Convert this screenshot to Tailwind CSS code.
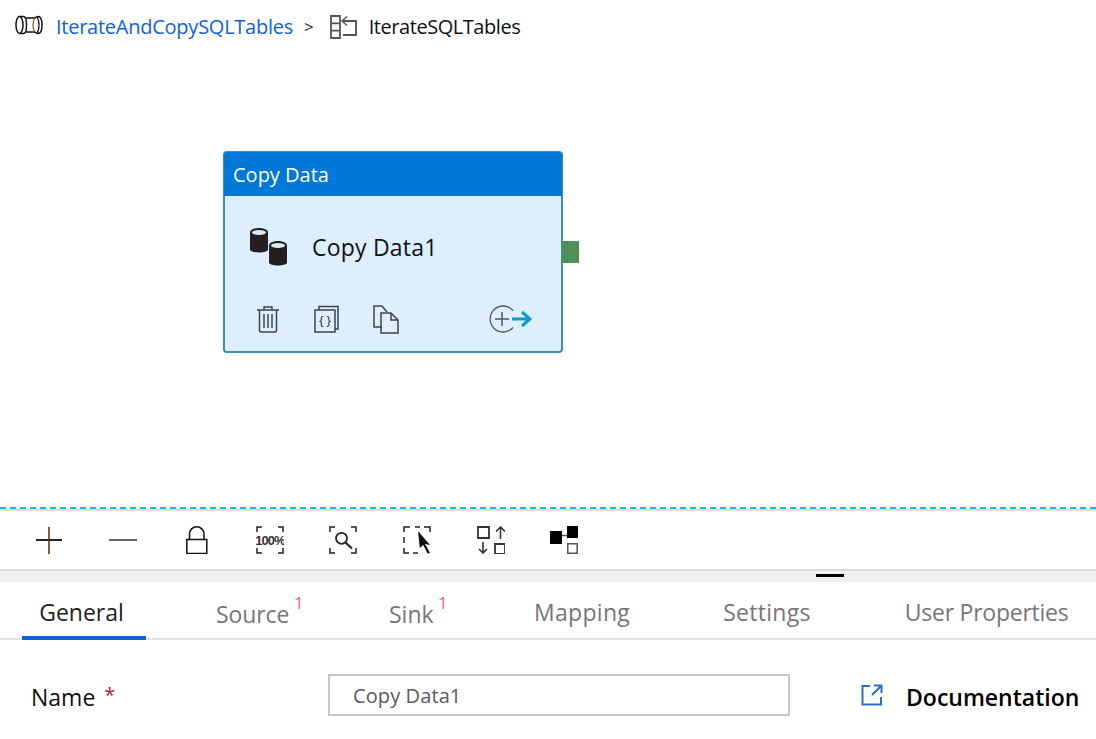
<!DOCTYPE html>
<html lang="en">
<head>
<meta charset="UTF-8">
<script src="https://cdn.jsdelivr.net/npm/@tailwindcss/browser@4"></script>
<title>IterateSQLTables</title>
</head>
<body class="bg-white h-[739px] w-[1096px] overflow-hidden font-['Open_Sans',sans-serif]">

<!-- breadcrumb -->
<div class="flex items-center h-[54px] pl-[15px] text-[20px]">
  <svg class="w-[28px] h-[20px] mb-[5px]" viewBox="0 0 28 20" fill="none" stroke="#111" stroke-width="1.500">
    <ellipse cx="4.500" cy="10" rx="3.500" ry="8.500"/>
    <path d="M4.500 1.500h4c2 0 3 4 3 8.500s-1 8.500-3 8.500h-4" />
    <path d="M11 3h9M11 17h9"/>
    <path d="M20 3c-1.500 2-2 4.500-2 7s.5 5 2 7" stroke="#8a5a10" stroke-width="1.200"/>
    <path d="M20 3c1-1 2-1.500 3-1.500 2.500 0 4 3.500 4 8.500s-1.500 8.500-4 8.500c-1 0-2-.5-3-1.500"/>
    <path d="M22 2c1.500 2 2 5 2 8s-.5 6-2 8" stroke-width="1.200"/>
  </svg>
  <span class="ml-[13px] w-[237px] tracking-[-0.25px] text-[#0f62d6]">IterateAndCopySQLTables</span>
  <span class="ml-[11px] text-[#222] text-[17px]">&gt;</span>
  <svg class="ml-[16px] w-[27px] h-[24px]" viewBox="0 0 27 24" fill="none" stroke="#555" stroke-width="1.800">
    <path d="M1 1h9v22H1zM1 8.300h9M1 15.600h9"/>
    <path d="M12 6h14v14H13"/>
    <path d="M17 1.500l-5 4.500 5 4.500" stroke-width="1.500"/>
  </svg>
  <span class="ml-[12px] tracking-[-0.45px] text-[#111]">IterateSQLTables</span>
</div>

<!-- pipeline canvas -->
<div class="relative h-[453px]">
  <div class="absolute left-[223px] top-[97px] w-[340px] h-[202px] rounded-[4px] border-2 border-[#3a8fb5] bg-[#ddefff]">
    <div class="h-[44px] -mt-[1px] -mx-[1px] rounded-t-[4px] bg-[#0078d7] text-white text-[20px] pl-[9px] leading-[46px]">Copy Data</div>
    <div class="flex items-center pl-[24px] mt-[29px] h-[44px]">
      <svg class="w-[40px] h-[40px]" viewBox="0 0 40 40">
        <path d="M1 5.500c0-6 18-6 18 0v17c0 4-18 4-18 0z" fill="#231f20"/>
        <ellipse cx="10" cy="5.500" rx="7" ry="2.500" fill="#dfe9f2"/>
        <path d="M20 18.500c0-6 18-6 18 0v17c0 4-18 4-18 0z" fill="#231f20"/>
        <ellipse cx="29" cy="18.500" rx="7" ry="2.500" fill="#dfe9f2"/>
      </svg>
      <span class="ml-[23px] text-[23px] tracking-[0.2px] text-[#111]">Copy Data1</span>
    </div>
    <div class="flex items-center mt-[34px] pl-[31px] h-[32px]">
      <svg class="w-[24px] h-[30px]" viewBox="0 0 24 30" fill="none" stroke="#444" stroke-width="1.500">
        <path d="M1 6h22M8 6V3h8v3M3.500 6v20.500q0 1.500 1.500 1.500h14q1.500 0 1.500-1.500V6M8 10v14M12 10v14M16 10v14"/>
      </svg>
      <svg class="ml-[33px] w-[26px] h-[30px]" viewBox="0 0 26 30" fill="none" stroke="#444" stroke-width="1.500">
        <path d="M2 6h20v22H2zM6 6V2.500h19V25h-3"/>
        <text x="12" y="21" text-anchor="middle" font-size="12" font-weight="400" fill="#222" stroke="none" font-family="Open Sans">{ }</text>
      </svg>
      <svg class="ml-[34px] w-[26px] h-[30px]" viewBox="0 0 26 30" fill="none" stroke="#444" stroke-width="1.500">
        <path d="M9 23H1V2h8l5 6"/>
        <path d="M8 9h10l7 7v13H8zM18 9v7h7"/>
      </svg>
      <svg class="ml-[89px] w-[44px] h-[30px]" viewBox="0 0 44 30" fill="none">
        <path d="M25 6.500A13 13 0 1 0 25 23.500" stroke="#555" stroke-width="1.300"/>
        <path d="M14 8v14M7 15h14" stroke="#555" stroke-width="1.500"/>
        <path d="M24 15h18M34 8l8 7-8 7" stroke="#119ac9" stroke-width="3"/>
      </svg>
    </div>
    <div class="absolute left-[337px] top-[88px] w-[17px] h-[22px] bg-[#4c9155]"></div>
  </div>
</div>

<!-- divider -->
<div class="border-t-2 border-dashed border-[#1ab5e6]"></div>
<div class="h-[2px] bg-[#dcdcdc]"></div>

<!-- toolbar -->
<div class="flex items-center h-[58px] pl-[35px] gap-[45.6px]">
  <svg class="w-[28px] h-[28px]" viewBox="0 0 28 28"><path d="M1 14h26" stroke="#222" stroke-width="2"/><path d="M14 1v27" stroke="#5b2a10" stroke-width="1.500"/></svg>
  <svg class="w-[28px] h-[28px]" viewBox="0 0 28 28"><path d="M0 14h28" stroke="#111" stroke-width="1.300"/></svg>
  <svg class="w-[28px] h-[28px]" viewBox="0 0 28 28" fill="none" stroke="#111" stroke-width="1.500"><path d="M4.800 13.500h20v14h-20zM7.500 13.500V8a7 7 0 0 1 14.500 0v5.500"/></svg>
  <svg class="w-[28px] h-[28px]" viewBox="0 0 28 28" fill="none" stroke="#222" stroke-width="1.500">
    <path d="M1 6V1h5M22 1h5v5M1 22v5h5M22 27h5v-5"/>
    <text x="28.500" y="19" text-anchor="end" font-size="13" font-weight="700" letter-spacing="-1" fill="#333" stroke="none" font-family="Liberation Sans">100%</text>
  </svg>
  <svg class="w-[28px] h-[28px]" viewBox="0 0 28 28" fill="none" stroke="#222" stroke-width="1.500">
    <path d="M1 6V1h5M22 1h5v5M1 22v5h5M22 27h5v-5"/>
    <circle cx="12.500" cy="12.300" r="5.500" stroke-width="1.800"/><path d="M16.500 16.500l6.500 6" stroke-width="2.200"/>
  </svg>
  <svg class="w-[28px] h-[28px]" viewBox="0 0 28 28" fill="none" stroke="#222" stroke-width="1.500">
    <path d="M1 6V1h6M12 1h5M21 1h6v5M1 11v6M1 22v5h5M10 27h5" />
    <path d="M15 5l12 14-5 -1 5 9-2.400.6-4.400-8.600-3.400 3z" fill="#111" stroke="none"/>
  </svg>
  <svg class="w-[28px] h-[28px]" viewBox="0 0 28 28" fill="none" stroke="#333" stroke-width="1.800">
    <path d="M1 1h11v11H1zM18 18h10v10H18z"/>
    <path d="M23.500 13V1M19 5.500l4.500-4.500 4.500 4.500M6 16v11M2 23l4 4 4-4" stroke-width="1.600"/>
  </svg>
  <svg class="w-[28px] h-[28px]" viewBox="0 0 28 28" fill="#000">
    <path d="M0 5h12v13H0zM17 0h11v12H17z"/>
    <path d="M12 9.500h5" fill="none" stroke="#555" stroke-width="1.500"/>
    <path d="M17.800 17.800h9.400v9.400h-9.400z" fill="#fff" stroke="#555" stroke-width="1.500"/>
  </svg>
</div>

<!-- resize bar -->
<div class="h-[13px] bg-[#f0f0f0] border-t-2 border-[#dcdcdc] flex justify-end pr-[252px] pt-[3px]">
  <div class="w-[28px] h-[3px] bg-black"></div>
</div>

<!-- tabs -->
<div class="flex h-[58px] border-b-2 border-[#e3e3e3] text-[23px] text-[#767676] pl-[22px]">
  <div class="w-[124px] h-[58px] border-b-4 border-[#0a63d8] text-center text-[#222] pt-[13px] pr-[5px]">General</div>
  <div class="ml-[70px] pt-[15px] relative w-[82px] tracking-[-0.1px]">Source<span class="absolute left-[78px] top-[8px] text-[17px] font-medium text-[#e8687a]">1</span></div>
  <div class="ml-[91px] pt-[15px] relative w-[50px]">Sink<span class="absolute left-[49px] top-[8px] text-[17px] font-medium text-[#e8687a]">1</span></div>
  <div class="ml-[95px] pt-[13px] tracking-[0.3px]">Mapping</div>
  <div class="ml-[93px] pt-[13px] tracking-[0.3px]">Settings</div>
  <div class="ml-[94px] pt-[13px] tracking-[-0.25px]">User Properties</div>
</div>

<!-- form row -->
<div class="flex items-center mt-[34px] pl-[31px] h-[42px]">
  <div class="w-[297px] text-[23px] text-[#111] pt-[5px]">Name <span class="text-[#b3242c] text-[20px] ml-[3px] relative -top-[4px]">*</span></div>
  <div class="w-[462px] h-[42px] border-2 border-[#c8c8c8] pl-[23px] pt-[1px] flex items-center text-[20px] tracking-[0.1px] text-[#595959]">Copy Data1</div>
  <svg class="ml-[71px] w-[22px] h-[22px]" viewBox="0 0 22 22" fill="none" stroke="#2a6fd0" stroke-width="2">
    <path d="M9 2H1.500v18.500H20V13M11 11L20 2M13 1.500h7.500V9"/>
  </svg>
  <span class="ml-[23px] text-[23px] font-semibold text-black pt-[5px]">Documentation</span>
</div>
</body>
</html>
